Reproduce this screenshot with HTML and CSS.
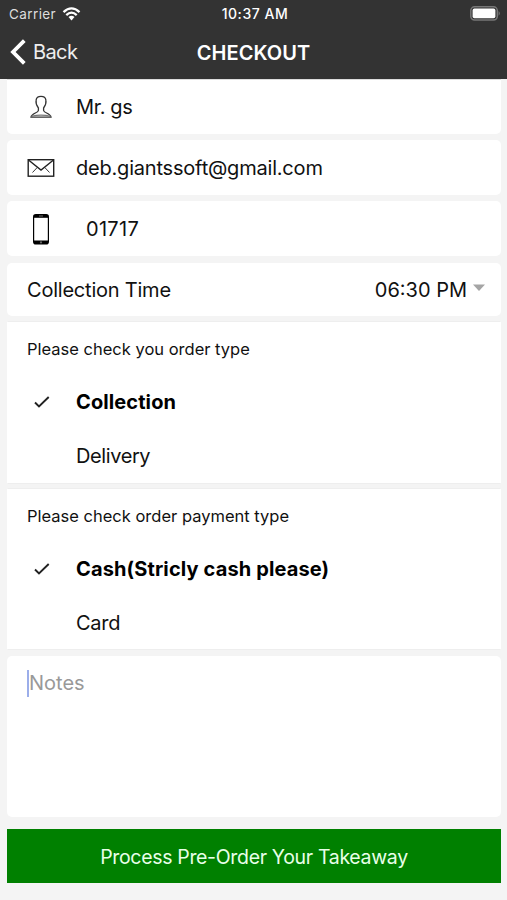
FILE: index.html
```html
<!DOCTYPE html>
<html lang="en">
<head>
<meta charset="utf-8">
<title>Checkout</title>
<link rel="stylesheet" href="styles.css">
</head>
<body>
<header class="top">
  <div class="status">
    <div class="carrier"><span>Carrier</span>
      <svg width="19" height="14" viewBox="0 0 18 14" fill="none" stroke="#fff" stroke-width="2.3"><path d="M1 5.2Q9-2.4 17 5.2"/><path d="M3.8 8.1Q9 3.2 14.2 8.1"/><path d="M6 10Q9 7.7 12 10L9 13.4Z" fill="#fff" stroke="none"/></svg>
    </div>
    <div class="clock">10:37 AM</div>
    <svg class="battery" width="31" height="15" viewBox="0 0 31 15"><rect x=".8" y=".8" width="26.5" height="13.2" rx="3.8" fill="#333" stroke="#777" stroke-width="1.5"/><rect x="2.6" y="2.6" width="22.8" height="9.6" rx="1.8" fill="#fff"/><path d="M28.7 5q2 2.3 0 4.8z" fill="#858585"/></svg>
  </div>
  <nav class="nav">
    <div class="back"><svg width="16" height="26" viewBox="0 0 16 26" fill="none" stroke="#fff" stroke-width="3.8"><path d="M14.3 1.7L3 13L14.3 24.3"/></svg><span>Back</span></div>
    <h1>CHECKOUT</h1>
  </nav>
</header>
<main>
  <section class="card field first">
    <svg class="icon" width="28" height="28" viewBox="0 0 28 28" fill="none" stroke="#333" stroke-width="1.3"><path d="M11.4 17.5V15C9.2 12.3 8.7 9.7 9.1 7.2C9.7 2.1 18.3 2.1 18.9 7.2C19.3 9.7 18.8 12.3 16.6 15V17.5C17 20 23.4 20.2 24 24.1H4C4.6 20.2 11 20 11.4 17.5Z"/><path d="M4.3 23.4Q14 20.8 23.7 23.4" stroke="#777"/></svg>
    <span class="name">Mr. gs</span>
  </section>
  <section class="card field">
    <svg class="icon" width="28" height="28" viewBox="0 0 28 28" fill="none" stroke="#222" stroke-width="1.4"><rect x="1.2" y="5.7" width="25.5" height="16.5"/><path d="M1.5 6L14 16L26.5 6"/><path d="M5.5 18.5L10.5 13.2M22.5 18.5L17.5 13.2" stroke-width=".9"/></svg>
    <span class="mail">deb.giantssoft@gmail.com</span>
  </section>
  <section class="card field">
    <svg class="icon" width="28" height="32" viewBox="0 0 28 32"><rect x="6" y="1" width="16" height="30.5" rx="2.8"/><rect x="7.2" y="4.8" width="13.6" height="22.7" fill="#fff"/><path d="M12 3h4" stroke="#888" stroke-width=".8"/><circle cx="14" cy="29.4" r="1.1" fill="#666"/></svg>
    <span class="phone">01717</span>
  </section>
  <section class="card time">
    <span class="time-label">Collection Time</span>
    <span class="time-value">06:30 PM</span>
    <svg width="12" height="8" viewBox="0 0 12 8"><path d="M0 .5H12L6 7Z" fill="#a5a5a5"/></svg>
  </section>
  <section class="card group">
    <h2>Please check you order type</h2>
    <div class="option selected"><svg width="18" height="14" viewBox="0 0 18 14" fill="none" stroke="#222" stroke-width="1.9"><path d="M2 7.5L6 11.5L15.7 2"/></svg><span class="collection">Collection</span></div>
    <div class="option"><span class="delivery">Delivery</span></div>
  </section>
  <section class="card group payment">
    <h2>Please check order payment type</h2>
    <div class="option selected"><svg width="18" height="14" viewBox="0 0 18 14" fill="none" stroke="#222" stroke-width="1.9"><path d="M2 7.5L6 11.5L15.7 2"/></svg><span class="cash">Cash(Stricly cash please)</span></div>
    <div class="option"><span class="credit">Card</span></div>
  </section>
  <section class="card notes"><i class="caret"></i><span>Notes</span></section>
  <button class="submit"><span>Process Pre-Order Your Takeaway</span></button>
</main>
</body>
</html>
```

FILE: styles.css
```css
* { box-sizing: border-box; }
body {
  margin: 0;
  height: 900px;
  overflow: hidden;
  background: #f4f4f4;
  color: #111;
  font-family: Inter, "Liberation Sans", sans-serif;
  font-size: 20px;
  line-height: 26px;
}
svg { display: block; flex: none; }
span { white-space: nowrap; }
.top { height: 79px; background: #333; color: #fff; }
.status {
  display: grid;
  grid-template-columns: 1fr auto 1fr;
  align-items: center;
  height: 27px;
  padding: 0 6px 0 9px;
  font-size: 13.5px;
}
.carrier { display: flex; align-items: center; gap: 6px; color: #ddd; letter-spacing: .4px; }
.clock { font-weight: 500; font-size: 14px; letter-spacing: .55px; }
.battery { justify-self: end; }
.nav { display: grid; grid-template-columns: 1fr auto 1fr; align-items: center; height: 50px; padding: 0 10px; }
.back { display: flex; align-items: center; gap: 7px; letter-spacing: -.6px; color: #eee; }
h1 { margin: 0; padding-top: 1px; font-size: 20px; font-weight: 600; letter-spacing: .05px; }
main { display: flex; flex-direction: column; gap: 6px; padding: 0 6px 0 7px; }
.card { height: 55px; border-radius: 5px; background: #fff; }
.field { display: flex; align-items: center; padding-left: 20px; gap: 21px; }
.first { border-top: 1px solid #ddd; border-radius: 0 0 5px 5px; }
.name { letter-spacing: -.35px; }
.mail { letter-spacing: -.2px; }
.phone { margin-left: 10px; letter-spacing: .3px; }
.time { display: flex; align-items: center; height: 53px; margin-top: 1px; padding: 0 16px 0 20px; }
.time-label { flex: 1; letter-spacing: -.22px; }
.time svg { margin: -4px 0 0 6px; }
.group { height: 161px; padding-left: 20px; border-radius: 0; box-shadow: 0 1px 1px -1px #ccc, 0 -1px 1px -1px #ccc; }
.payment { height: 160px; }
h2 { margin: 0; padding-top: 14px; height: 53px; font-size: 16.5px; font-weight: 400; line-height: 26px; }
.option { display: flex; align-items: center; height: 54px; padding-left: 49px; }
.selected { padding-left: 6px; gap: 25px; font-weight: 700; color: #000; }
.collection { letter-spacing: .1px; }
.delivery { letter-spacing: -.4px; }
.cash { letter-spacing: .13px; }
.credit { letter-spacing: -.3px; }
.notes { display: flex; height: 161px; margin-top: 1px; padding: 14px 20px; color: #999; }
.caret { width: 2px; height: 27px; background: #9caeea; }
.submit { height: 54px; margin-top: 6px; border: 0; padding: 1px 0 0; background: #008000; color: #e8ffe8; font: inherit; font-size: 19.5px; letter-spacing: -.33px; }
```
